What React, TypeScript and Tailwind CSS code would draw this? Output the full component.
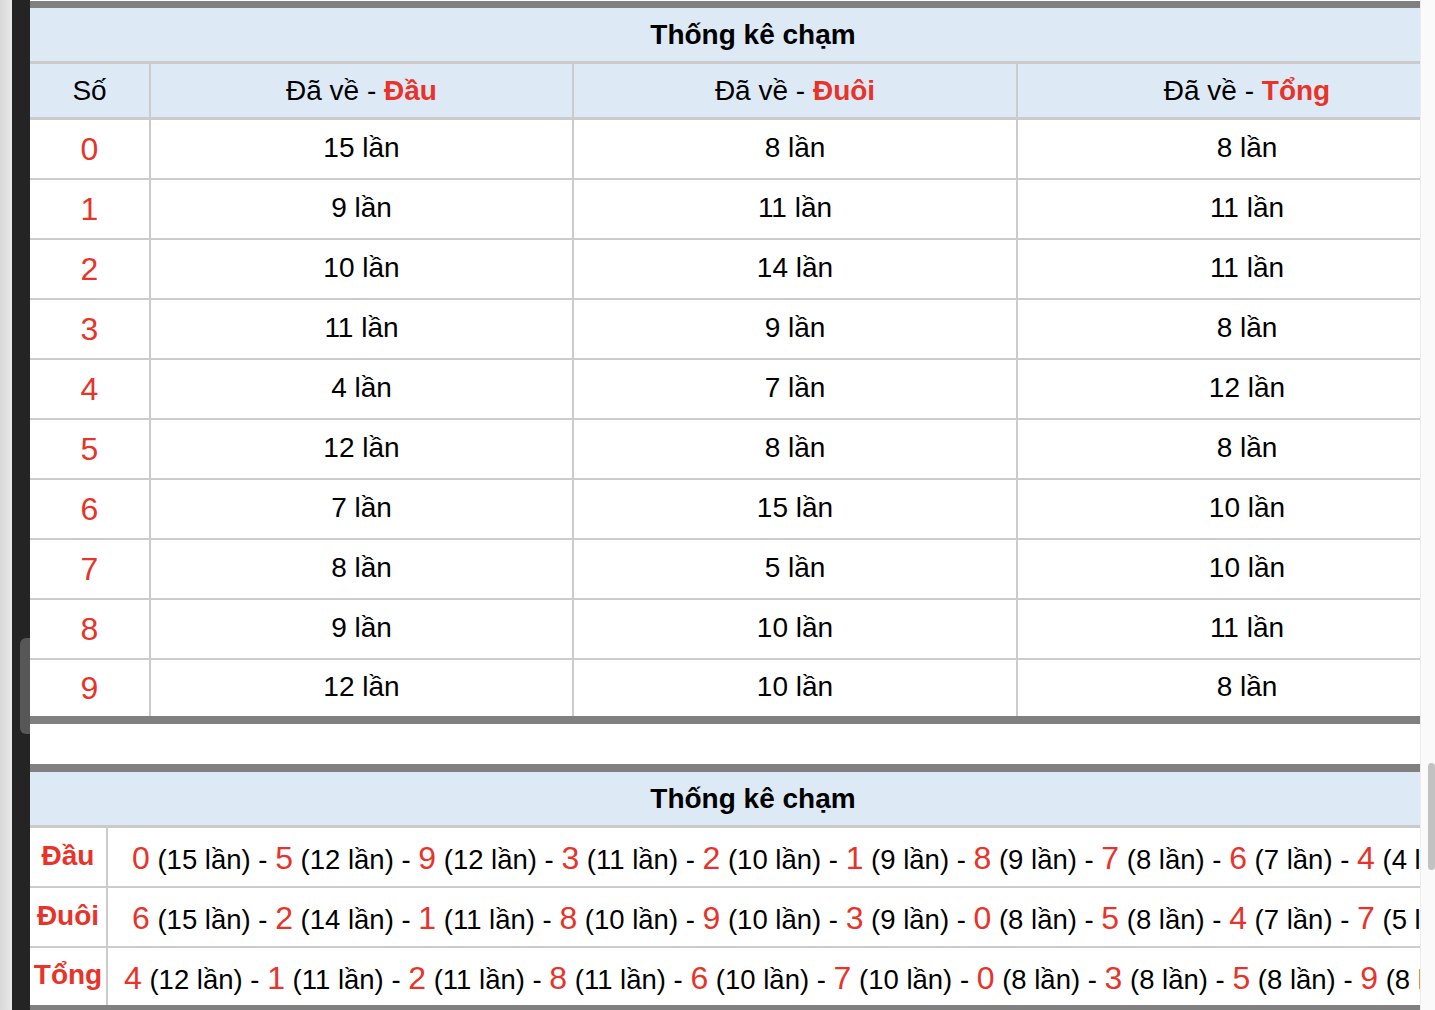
import React from "react";

const counts = [
  ["15", "8", "8"],
  ["9", "11", "11"],
  ["10", "14", "11"],
  ["11", "9", "8"],
  ["4", "7", "12"],
  ["12", "8", "8"],
  ["7", "15", "10"],
  ["8", "5", "10"],
  ["9", "10", "11"],
  ["12", "10", "8"],
];

const summary: { label: string; pad: string; items: [number, number][] }[] = [
  {
    label: "Đầu",
    pad: "pl-[24px]",
    items: [[0, 15], [5, 12], [9, 12], [3, 11], [2, 10], [1, 9], [8, 9], [7, 8], [6, 7], [4, 4]],
  },
  {
    label: "Đuôi",
    pad: "pl-[24px]",
    items: [[6, 15], [2, 14], [1, 11], [8, 10], [9, 10], [3, 9], [0, 8], [5, 8], [4, 7], [7, 5]],
  },
  {
    label: "Tổng",
    pad: "pl-[16px]",
    items: [[4, 12], [1, 11], [2, 11], [8, 11], [6, 10], [7, 10], [0, 8], [3, 8], [5, 8], [9, 8]],
  },
];

const HeadCell = ({ label, last }: { label: string; last?: boolean }) => (
  <div
    className={`flex items-center justify-center ${last ? "" : "border-r-2 border-[#cbcbcb]"}`}
  >
    <span className="whitespace-pre">Đã về - </span>
    <span className="font-bold text-[#e8332a]">{label}</span>
  </div>
);

export default function App() {
  return (
    <div className="flex h-[1010px] w-[1435px] overflow-hidden bg-white font-['Liberation_Sans',Arial,sans-serif] text-black">
      {/* left browser chrome */}
      <div className="w-[12px] bg-gradient-to-r from-[#d9d9d9] to-[#e8e8e8]" />
      <div className="relative w-[18px] bg-[#242424]">
        <div className="absolute left-[8px] top-[638px] h-[96px] w-[10px] rounded-l-[6px] bg-[#575757]" />
      </div>

      {/* the tables are wider than the viewport and get clipped on the right */}
      <div className="w-[1390px] overflow-hidden pt-px">
        <div className="w-[1446px]">
          {/* table 1 */}
          <div className="border-t-[7px] border-b-[8px] border-[#808080]">
            <div className="flex h-[56px] items-center justify-center border-b-[3px] border-[#cbcbcb] bg-[#ddeaf6] text-[28px] font-bold">
              Thống kê chạm
            </div>
            <div className="grid h-[56px] grid-cols-[121px_423px_444px_458px] border-b-[3px] border-[#cbcbcb] bg-[#ddeaf6] text-[28px]">
              <div className="flex items-center justify-center border-r-2 border-[#cbcbcb]">Số</div>
              <HeadCell label="Đầu" />
              <HeadCell label="Đuôi" />
              <HeadCell label="Tổng" last />
            </div>
            {counts.map((row, i) => (
              <div
                key={i}
                className={`grid grid-cols-[121px_423px_444px_458px] text-[28px] ${
                  i === counts.length - 1 ? "h-[56px]" : "h-[60px] border-b-2 border-[#cbcbcb]"
                }`}
              >
                <div className="flex items-center justify-center border-r-2 border-[#cbcbcb] text-[32px] text-[#e8332a]">
                  {i}
                </div>
                <div className="flex items-center justify-center border-r-2 border-[#cbcbcb] pb-[2px]">
                  {row[0]} lần
                </div>
                <div className="flex items-center justify-center border-r-2 border-[#cbcbcb] pb-[2px]">
                  {row[1]} lần
                </div>
                <div className="flex items-center justify-center pb-[2px]">{row[2]} lần</div>
              </div>
            ))}
          </div>

          <div className="h-[40px]" />

          {/* table 2 */}
          <div className="border-t-[8px] border-b-[8px] border-[#808080]">
            <div className="flex h-[56px] items-center justify-center border-b-[3px] border-[#cbcbcb] bg-[#ddeaf6] text-[28px] font-bold">
              Thống kê chạm
            </div>
            {summary.map((s, i) => (
              <div
                key={s.label}
                className={`grid grid-cols-[78px_1368px] ${
                  i === summary.length - 1 ? "h-[57px]" : "h-[60px] border-b-2 border-[#cbcbcb]"
                }`}
              >
                <div className="flex items-center justify-center border-r-2 border-[#cbcbcb] pb-[3px] text-[28px] font-bold text-[#e8332a]">
                  {s.label}
                </div>
                <div
                  className={`overflow-hidden whitespace-pre pt-[9px] text-[27.5px] leading-[42px] ${s.pad}`}
                >
                  {s.items.map(([d, n], j) => (
                    <React.Fragment key={j}>
                      <span className="text-[32px] text-[#e8332a]">{d}</span>
                      {` (${n} lần)`}
                      {j < s.items.length - 1 ? " - " : ""}
                    </React.Fragment>
                  ))}
                </div>
              </div>
            ))}
          </div>
        </div>
      </div>

      {/* right scrollbar */}
      <div className="relative w-[15px] border-l border-[#ececec] bg-[#fafafa]">
        <div className="absolute left-[7px] top-[763px] h-[107px] w-[7px] rounded-[4px] bg-[#c2c2c2]" />
      </div>
    </div>
  );
}
